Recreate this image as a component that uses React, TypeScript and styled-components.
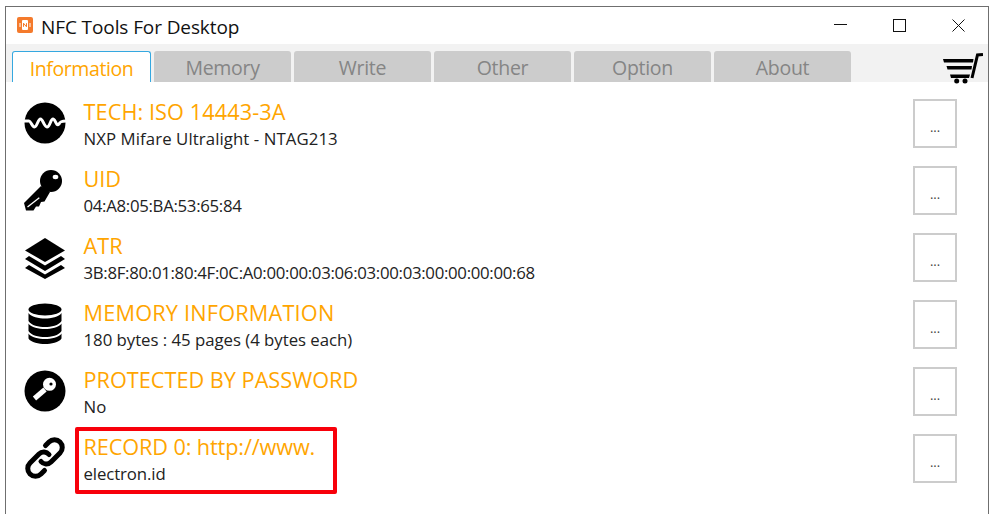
import React from "react";
import styled, { createGlobalStyle } from "styled-components";

const Global = createGlobalStyle`
  html, body { margin: 0; padding: 0; background: #fff; }
  body { font-family: "Open Sans", "Noto Sans", "Liberation Sans", sans-serif; width: 994px; height: 514px; overflow: hidden; }
  *, *::before, *::after { box-sizing: border-box; }
`;

const Page = styled.div`
  width: 994px;
  height: 514px;
  padding: 6px 5px 0 5px;
`;
const Win = styled.div`
  width: 984px;
  height: 508px;
  border: 1px solid #6f6f6f;
  border-bottom: none;
  display: flex;
  flex-direction: column;
  background: #fff;
`;
const TitleBar = styled.div`
  height: 37px;
  flex: none;
  display: flex;
  align-items: center;
  padding-left: 11px;
`;
const AppIcon = styled.svg`
  width: 16px;
  height: 16px;
  flex: none;
  margin-top: -1px;
`;
const TitleText = styled.div`
  margin-left: 8px;
  margin-top: 2px;
  font-size: 19px;
  letter-spacing: -0.1px;
  color: #111;
  white-space: nowrap;
`;
const WinButtons = styled.div`
  margin-left: auto;
  display: flex;
  align-items: center;
  padding-right: 23px;
  gap: 46px;
`;
const WinGlyph = styled.svg`
  width: 13px;
  height: 13px;
  display: block;
  stroke: #111;
  fill: none;
`;
const TabStrip = styled.div`
  height: 38px;
  flex: none;
  background: #f2f2f2;
  display: flex;
  align-items: flex-end;
  padding-left: 6px;
  position: relative;
`;
const Tab = styled.div<{ $active?: boolean }>`
  height: 31px;
  width: ${(p) => (p.$active ? "139px" : "137px")};
  margin-right: 3px;
  border-radius: 3px 3px 0 0;
  display: flex;
  align-items: center;
  justify-content: center;
  font-size: 19.5px;
  letter-spacing: ${(p) => (p.$active ? "-0.4px" : "-0.3px")};
  padding-top: 2px;
  color: ${(p) => (p.$active ? "#ffa500" : "#858585")};
  background: ${(p) => (p.$active ? "#fff" : "#cccccc")};
  border: ${(p) => (p.$active ? "1px solid #35a8e0" : "none")};
  border-bottom: none;
`;
const Cart = styled.svg`
  position: absolute;
  right: 5px;
  top: 9px;
  width: 40px;
  height: 31px;
`;
const List = styled.div`
  display: flex;
  flex-direction: column;
  gap: 18px;
  padding: 17px 31px 0 17px;
`;
const Row = styled.div`
  height: 49px;
  display: flex;
  align-items: flex-start;
`;
const IconSlot = styled.div`
  width: 44px;
  height: 48px;
  flex: none;
  display: flex;
  align-items: center;
  justify-content: center;
`;
const TextBlock = styled.div<{ $marked?: boolean }>`
  position: relative;
  margin: -1px 0 0 16.5px;
  flex: 1;
  &::after {
    content: "";
    display: ${(p) => (p.$marked ? "block" : "none")};
    position: absolute;
    left: -8.5px;
    top: -6px;
    width: 262px;
    height: 67px;
    border: 4px solid #f8000a;
    border-radius: 2px;
  }
`;
const RowTitle = styled.div<{ $spacing?: number }>`
  font-size: 21.7px;
  line-height: 27px;
  letter-spacing: ${(p) => p.$spacing ?? 0}px;
  color: #ffa500;
  white-space: nowrap;
`;
const RowValue = styled.div<{ $spacing?: number }>`
  margin-top: 3px;
  font-size: 16.8px;
  line-height: 22px;
  letter-spacing: ${(p) => p.$spacing ?? 0}px;
  color: #222;
  white-space: nowrap;
`;
const MoreButton = styled.div`
  width: 44px;
  height: 49px;
  flex: none;
  border: 2px solid #cccccc;
  display: flex;
  align-items: center;
  justify-content: center;
  font-size: 13px;
  padding-top: 6px;
  color: #444;
`;

const Wave = () => (
  <svg width="42" height="42" viewBox="0 0 42 42">
    <circle cx="21" cy="21" r="20.5" fill="#000" />
    <path d="M0 19H5C7 19 8 25 10.500 25S14 17 16.500 17 20 25 23 25 26.500 17 29 17 32 25 35 22C36 20 37 19 42 19" fill="none" stroke="#fff" strokeWidth="3" />
  </svg>
);
const Key = () => (
  <svg width="42" height="44" viewBox="0 0 42 44">
    <circle cx="27" cy="13" r="11" fill="#000" />
    <ellipse cx="31.500" cy="9" rx="2.800" ry="2.200" fill="#fff" />
    <path d="M17 18L0 35 2 42.500 9.500 42.500 12 38.500 15 38.500 17 34 20.500 33.500 26 24Z" fill="#000" />
    <path d="M15.300 29.700L3.500 39" stroke="#fff" strokeWidth="1.300" />
  </svg>
);
const Layers = () => (
  <svg width="42" height="44" viewBox="0 0 42 44">
    <path d="M21 3L41 15.500 21 27 1 15.500Z" fill="#000" />
    <path d="M5 21L1 24 21 36 41 24 37 21 21 30.500Z" fill="#000" />
    <path d="M5 30L1 33 21 44 41 33 37 30 21 39.500Z" fill="#000" />
  </svg>
);
const Database = () => (
  <svg width="36" height="42" viewBox="0 0 36 42">
    <ellipse cx="18" cy="6.500" rx="16.500" ry="6" fill="#000" />
    <path d="M1.500 10C4 14 12 15.500 18 15.500S32 14 34.500 10V18C32 22.500 24 24 18 24S4 22.500 1.500 18Z" fill="#000" />
    <path d="M1.500 20.500C4 24.500 12 26 18 26S32 24.500 34.500 20.500V28C32 32.500 24 34 18 34S4 32.500 1.500 28Z" fill="#000" />
    <path d="M1.500 30.500C4 34.500 12 36 18 36S32 34.500 34.500 30.500V35.500C32 39.500 24 41 18 41S4 39.500 1.500 35.500Z" fill="#000" />
  </svg>
);
const KeyCircle = () => (
  <svg width="42" height="42" viewBox="0 0 42 42">
    <circle cx="21" cy="21" r="20.500" fill="#000" />
    <circle cx="25.500" cy="14.300" r="6.500" fill="#fff" />
    <circle cx="27" cy="14" r="1.600" fill="#000" />
    <path d="M21 19.500L10.500 28.500" stroke="#fff" strokeWidth="5" />
  </svg>
);
const LinkIcon = () => (
  <svg width="42" height="42" viewBox="0 0 42 42" fill="none" stroke="#000" strokeWidth="5" strokeLinecap="round">
    <path d="M17 24.500c2.500 3 7 3.500 10 .5l9-9c3-3 3-8 0-11s-8-3-11 0l-3.500 3.500" />
    <path d="M25 17.500c-2.500-3-7-3.500-10-.5l-9 9c-3 3-3 8 0 11s8 3 11 0l3.500-3.500" />
  </svg>
);

const rows = [
  { icon: <Wave />, title: "TECH: ISO 14443-3A", titleSpacing: 0.08, value: "NXP Mifare Ultralight - NTAG213", valueSpacing: 0.08 },
  { icon: <Key />, title: "UID", value: "04:A8:05:BA:53:65:84", valueSpacing: -0.3 },
  { icon: <Layers />, title: "ATR", value: "3B:8F:80:01:80:4F:0C:A0:00:00:03:06:03:00:03:00:00:00:00:68", valueSpacing: -0.3 },
  { icon: <Database />, title: "MEMORY INFORMATION", titleSpacing: 0.2, value: "180 bytes : 45 pages (4 bytes each)", valueSpacing: -0.03 },
  { icon: <KeyCircle />, title: "PROTECTED BY PASSWORD", value: "No" },
  { icon: <LinkIcon />, title: "RECORD 0: http://www.", titleSpacing: -0.12, value: "electron.id", valueSpacing: -0.1, marked: true },
];
const tabs = ["Information", "Memory", "Write", "Other", "Option", "About"];

export default function App() {
  return (
    <Page>
      <Global />
      <Win>
        <TitleBar>
          <AppIcon viewBox="0 0 16 16">
            <rect width="16" height="16" rx="2" fill="#f47a2c" />
            <rect x="5" y="3" width="6" height="10" rx="1" fill="#fff" />
            <path d="M6.500 9.800V6.200L9.500 9.800V6.200" stroke="#f47a2c" strokeWidth="1" fill="none" />
            <path d="M3 6V10M13 6V10" stroke="#fff" strokeWidth="1" />
          </AppIcon>
          <TitleText>NFC Tools For Desktop</TitleText>
          <WinButtons>
            <WinGlyph viewBox="0 0 13 13"><path d="M0 5.500H13" /></WinGlyph>
            <WinGlyph viewBox="0 0 13 13"><rect x="0.500" y="0.500" width="12" height="12" /></WinGlyph>
            <WinGlyph viewBox="0 0 13 13"><path d="M.5.5L12.500 12.500M12.500.5L.5 12.500" /></WinGlyph>
          </WinButtons>
        </TitleBar>
        <TabStrip>
          {tabs.map((t, i) => (
            <Tab key={t} $active={i === 0}>{t}</Tab>
          ))}
          <Cart viewBox="0 0 40 31">
            <path d="M40 1.500L34.500 2 29 25" fill="none" stroke="#000" strokeWidth="3" />
            <path d="M0 6H30.500L30 9.500H1ZM3.500 13H29L28.500 16.500H4.500ZM7 21.500H27L26 25H8Z" fill="#000" />
            <circle cx="13.700" cy="28" r="2.500" fill="#000" />
            <circle cx="22" cy="28" r="2.500" fill="#000" />
          </Cart>
        </TabStrip>
        <List>
          {rows.map((r) => (
            <Row key={r.title}>
              <IconSlot>{r.icon}</IconSlot>
              <TextBlock $marked={r.marked}>
                <RowTitle $spacing={r.titleSpacing}>{r.title}</RowTitle>
                <RowValue $spacing={r.valueSpacing}>{r.value}</RowValue>
              </TextBlock>
              <MoreButton>...</MoreButton>
            </Row>
          ))}
        </List>
      </Win>
    </Page>
  );
}
